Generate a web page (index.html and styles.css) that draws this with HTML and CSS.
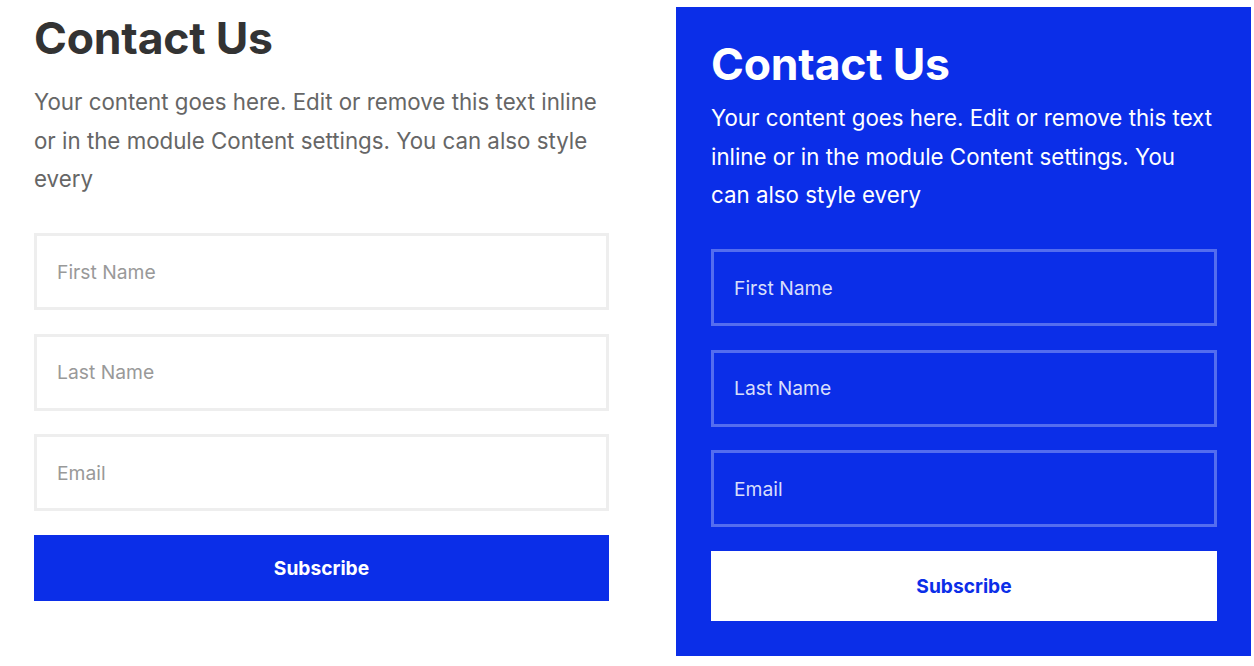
FILE: index.html
```html
<!DOCTYPE html>
<html lang="en">
<head>
<meta charset="utf-8">
<title>Contact Us</title>
<link rel="stylesheet" href="styles.css">
</head>
<body>
<div class="page">
  <section class="optin optin-light">
    <h1 class="optin-title">Contact Us</h1>
    <p class="optin-text">Your content goes here. Edit or remove this text inline or in the module Content settings. You can also style every</p>
    <form class="optin-form">
      <input class="field" type="text" placeholder="First Name">
      <input class="field" type="text" placeholder="Last Name">
      <input class="field" type="email" placeholder="Email">
      <button class="btn" type="button">Subscribe</button>
    </form>
  </section>
  <section class="optin optin-blue">
    <h1 class="optin-title">Contact Us</h1>
    <p class="optin-text">Your content goes here. Edit or remove this text inline or in the module Content settings. You can also style every</p>
    <form class="optin-form">
      <input class="field" type="text" placeholder="First Name">
      <input class="field" type="text" placeholder="Last Name">
      <input class="field" type="email" placeholder="Email">
      <button class="btn" type="button">Subscribe</button>
    </form>
  </section>
</div>
</body>
</html>
```

FILE: styles.css
```css
* { box-sizing: border-box; }

html, body {
  margin: 0;
  padding: 0;
  background: #ffffff;
  font-family: Inter, "Noto Sans", sans-serif;
}

.page {
  display: flex;
  align-items: flex-start;
  padding-left: 34px;
}

.optin {
  width: 575px;
  display: flex;
  flex-direction: column;
}

.optin-title {
  margin: 0;
  font-size: 44.5px;
  line-height: 52.8px;
  font-weight: 700;
  letter-spacing: -0.2px;
}

.optin-text {
  margin: 0;
  font-size: 22.3px;
  line-height: 38.5px;
  font-weight: 400;
}

.optin-form {
  display: flex;
  flex-direction: column;
  gap: 23.5px;
  margin-top: 34.5px;
}

.field {
  display: block;
  width: 100%;
  height: 77px;
  margin: 0;
  padding: 0 20px;
  font-family: Inter, "Noto Sans", sans-serif;
  font-size: 19.3px;
  border-radius: 0;
  outline: none;
}

.btn {
  display: block;
  width: 100%;
  margin: 0;
  border: 0;
  border-radius: 0;
  font-family: Inter, "Noto Sans", sans-serif;
  font-size: 19.2px;
  font-weight: 700;
  cursor: pointer;
}

/* light variant */
.optin-light {
  padding-top: 12.3px;
}

.optin-light .optin-title { color: #333333; }

.optin-light .optin-text {
  color: #666666;
  margin-top: 18px;
}

.optin-light .field {
  background: #ffffff;
  border: 3px solid #eeeeee;
  color: #333333;
}

.optin-light .field::placeholder { color: #999999; }

.optin-light .btn {
  height: 66px;
  background: #0b2ee8;
  color: #ffffff;
}

/* blue variant */
.optin-blue {
  margin-left: 67px;
  margin-top: 7px;
  padding: 30.6px 34px 35px 35px;
  background: #0b2ee8;
}

.optin-blue .optin-title { color: #ffffff; }

.optin-blue .optin-text {
  color: #ffffff;
  margin-top: 9px;
}

.optin-blue .field {
  background: transparent;
  border: 3px solid rgba(255, 255, 255, 0.3);
  color: #ffffff;
}

.optin-blue .field::placeholder { color: rgba(255, 255, 255, 0.85); }

.optin-blue .btn {
  height: 70px;
  background: #ffffff;
  color: #0b2ee8;
}
```
